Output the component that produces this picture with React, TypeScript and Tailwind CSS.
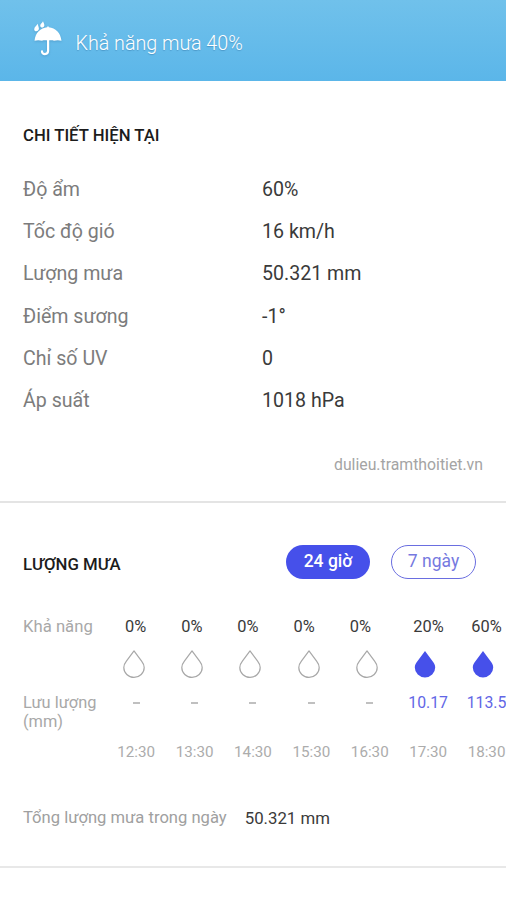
const details = [
  { label: "Độ ẩm", value: "60%" },
  { label: "Tốc độ gió", value: "16 km/h" },
  { label: "Lượng mưa", value: "50.321 mm" },
  { label: "Điểm sương", value: "-1°" },
  { label: "Chỉ số UV", value: "0" },
  { label: "Áp suất", value: "1018 hPa" },
];

const dryChances = ["0%", "0%", "0%", "0%", "0%"];
const wetChances = ["20%", "60%"];

const hours = [
  { time: "12:30", amount: "" },
  { time: "13:30", amount: "" },
  { time: "14:30", amount: "" },
  { time: "15:30", amount: "" },
  { time: "16:30", amount: "" },
  { time: "17:30", amount: "10.17" },
  { time: "18:30", amount: "113.5" },
];

function Umbrella() {
  return (
    <svg
      width="28"
      height="36"
      viewBox="0 0 28 36"
      fill="white"
      className="shrink-0 drop-shadow-[0_1px_1px_rgba(40,100,150,0.3)]"
    >
      <path d="M0.5 20.8C1.4 12.8 6.5 7.9 13.2 7.3V6.7Q14 5.6 14.8 6.7V7.3C21.5 7.9 26.6 12.8 27.5 20.8C25 20 22.5 20 20 20.8C18.1 20.2 16.3 20.2 14 20.8C11.7 20.2 9.9 20.2 8 20.8C5.5 20 3 20 0.5 20.8Z" />
      <path
        d="M14.1 18V30.8C14.1 35.2 7.8 35 8 31.4"
        fill="none"
        stroke="white"
        strokeWidth="2.2"
        strokeLinecap="round"
      />
      <path d="M3.6 3.8C2.6 5.8 0.1 7.2 0.2 9.4C0.4 12.1 4.8 11.9 4.9 8.8C4.9 7.2 4 5.4 3.6 3.8Z" />
      <path d="M9 1.2C8.2 3 6.1 4 6.2 5.7C6.3 8.3 10.2 8.1 10.4 5.2C10.4 3.9 9.4 2.4 9 1.2Z" />
    </svg>
  );
}

function Drop({ filled }: { filled: boolean }) {
  return (
    <svg
      width="22"
      height="28"
      viewBox="0 0 22 28"
      className={
        filled
          ? "fill-[#4650ea] stroke-none"
          : "fill-none stroke-[#a8a8a8]"
      }
      strokeWidth="1.2"
      strokeLinejoin="round"
    >
      <path d="M11 0.9L3.4 11.2C1.8 13.3 0.8 15 0.8 17.4A10.2 10 0 0 0 21.2 17.4C21.2 15 20.2 13.3 18.6 11.2Z" />
    </svg>
  );
}

export default function App() {
  return (
    <main className="h-[900px] w-[506px] overflow-hidden bg-white font-[Roboto,sans-serif] text-[#3a3a3a]">
      <header className="flex h-[81px] items-start gap-[13.5px] bg-linear-to-b from-[#70c1eb] to-[#5bb6e9] pt-[20px] pl-[34px]">
        <Umbrella />
        <p className="pt-[10px] text-[19.7px] leading-[28px] font-light whitespace-nowrap text-white [text-shadow:0_1px_1px_rgba(40,100,150,0.4)]">
          Khả năng mưa 40%
        </p>
      </header>

      <section className="h-[422px] border-b-2 border-[#e4e4e4] pt-[43px] pr-[23px] pl-[23px]">
        <h2 className="text-[16.7px] leading-[24px] font-medium whitespace-nowrap text-[#1c1c1c]">
          CHI TIẾT HIỆN TẠI
        </h2>
        <dl className="mt-[21px]">
          {details.map((item) => (
            <div
              key={item.label}
              className="flex h-[42.2px] items-center text-[19.6px] leading-[28px]"
            >
              <dt className="w-[239px] text-[#7c7c7c]">{item.label}</dt>
              <dd>{item.value}</dd>
            </div>
          ))}
        </dl>
        <p className="mt-[31px] text-right text-[15.8px] leading-[24px] text-[#a4a4a4]">
          dulieu.tramthoitiet.vn
        </p>
      </section>

      <section className="h-[365px] border-b-2 border-[#e8e8e8] pt-[41px] pl-[23px]">
        <div className="flex h-[35px] items-center pr-[30px]">
          <h2 className="mr-auto pt-[4px] text-[16.8px] leading-[24px] font-medium text-[#1c1c1c]">
            LƯỢNG MƯA
          </h2>
          <button className="h-[34px] w-[84px] rounded-full bg-[#4650ea] text-[17.5px] font-medium text-white">
            24 giờ
          </button>
          <button className="ml-[21px] h-[34px] w-[85px] rounded-full border border-[#6a6ee0] text-[17.5px] text-[#7679e0]">
            7 ngày
          </button>
        </div>

        <div className="mt-[36px] flex h-[24px] items-center text-[16.4px] whitespace-nowrap">
          <span className="w-[84.5px] shrink-0 text-[16.7px] text-[#a8a8a8]">
            Khả năng
          </span>
          {dryChances.map((chance, i) => (
            <span key={i} className="w-[56.2px] shrink-0 text-center">
              {chance}
            </span>
          ))}
          <span className="w-[11px] shrink-0" />
          {wetChances.map((chance) => (
            <span key={chance} className="w-[58px] shrink-0 text-center">
              {chance}
            </span>
          ))}
        </div>

        <div className="mt-[11px] flex pl-[82px]">
          {hours.map((hour) => (
            <span
              key={hour.time}
              className="flex w-[58.2px] shrink-0 justify-center"
            >
              <Drop filled={hour.amount !== ""} />
            </span>
          ))}
        </div>

        <div className="mt-[15px] flex h-[40px] text-[16.4px] leading-[19px]">
          <span className="w-[84px] shrink-0 text-[#a8a8a8]">
            Lưu lượng (mm)
          </span>
          {hours.map((hour) => (
            <span
              key={hour.time}
              className="flex h-[19px] w-[58.4px] shrink-0 items-center justify-center text-[15.8px] text-[#6266e6]"
            >
              {hour.amount || <i className="h-[2px] w-[7px] bg-[#c0c0c0]" />}
            </span>
          ))}
        </div>

        <div className="mt-[7px] flex pl-[84px] text-[15.2px] leading-[24px] text-[#acacac]">
          {hours.map((hour) => (
            <span
              key={hour.time}
              className="w-[58.4px] shrink-0 text-center"
            >
              {hour.time}
            </span>
          ))}
        </div>

        <div className="mt-[42px] flex gap-[18px] text-[16.6px] leading-[24px] whitespace-nowrap">
          <span className="text-[#a0a0a0]">Tổng lượng mưa trong ngày</span>
          <span className="text-[16.8px]">50.321 mm</span>
        </div>
      </section>
    </main>
  );
}
